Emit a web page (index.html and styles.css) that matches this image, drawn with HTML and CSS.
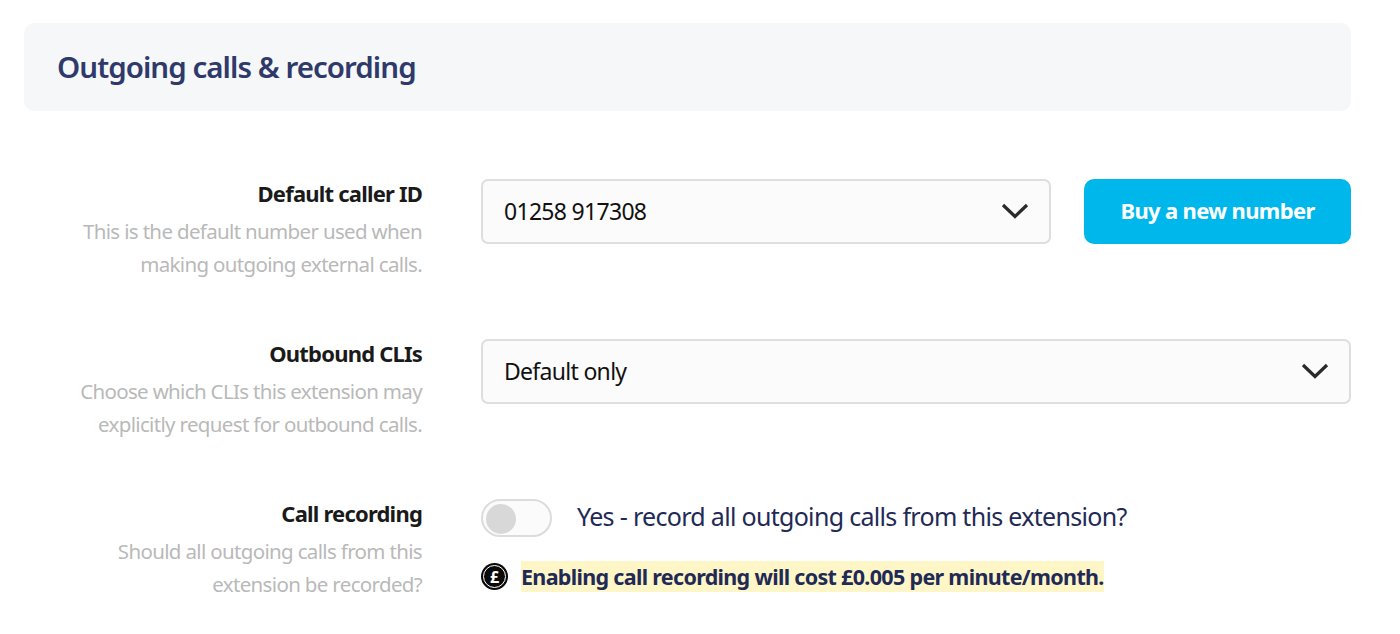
FILE: index.html
```html
<!DOCTYPE html>
<html lang="en">
<head>
  <meta charset="UTF-8" />
  <title>Outgoing calls &amp; recording</title>
  <link rel="stylesheet" href="styles.css">
</head>
<body>
  <div class="panel-header">
    <h2>Outgoing calls &amp; recording</h2>
  </div>

  <div class="row">
    <div class="info">
      <label>Default caller ID</label>
      <p>This is the default number used when<br>making outgoing external calls.</p>
    </div>
    <div class="controls">
      <div class="select">
        <span>01258 917308</span>
        <svg class="chevron" viewBox="0 0 28 18"><path d="M2 3 L14 14.5 L26 3" /></svg>
      </div>
      <button>Buy a new number</button>
    </div>
  </div>

  <div class="row">
    <div class="info">
      <label>Outbound CLIs</label>
      <p>Choose which CLIs this extension may<br>explicitly request for outbound calls.</p>
    </div>
    <div class="controls">
      <div class="select">
        <span>Default only</span>
        <svg class="chevron" viewBox="0 0 28 18"><path d="M2 3 L14 14.5 L26 3" /></svg>
      </div>
    </div>
  </div>

  <div class="row">
    <div class="info">
      <label>Call recording</label>
      <p>Should all outgoing calls from this<br>extension be recorded?</p>
    </div>
    <div>
      <div class="toggle-line">
        <div class="toggle"><div class="knob"></div></div>
        <span class="toggle-text">Yes - record all outgoing calls from this extension?</span>
      </div>
      <div class="notice">
        <span class="pound">£</span>
        <span class="highlight">Enabling call recording will cost £0.005 per minute/month.</span>
      </div>
    </div>
  </div>
</body>
</html>
```

FILE: styles.css
```css
body {
  margin: 0;
  padding: 23px 49px 0 24px;
  font-family: "Noto Sans", sans-serif;
  background: white;
  overflow: hidden;
}
.panel-header {
  height: 88px;
  padding-left: 33px;
  display: flex;
  align-items: center;
  background: #f6f7f9;
  border-radius: 10px;
}
h2 {
  margin: 0 0 1px;
  font-size: 29.5px;
  font-weight: 600;
  letter-spacing: -0.95px;
  color: #2f3a6b;
}
.row {
  display: flex;
  gap: 59px;
  height: 160px;
}
.panel-header + .row {
  margin-top: 68px;
}
.info {
  width: 398px;
  flex-shrink: 0;
  text-align: right;
}
label {
  display: block;
  font-size: 22px;
  line-height: 28px;
  font-weight: 700;
  letter-spacing: -0.8px;
  color: #1a1a1a;
}
.info p {
  margin: 8px 0 0;
  font-size: 20.5px;
  line-height: 32.5px;
  letter-spacing: -0.66px;
  color: #b9b9b9;
}
.controls {
  flex: 1;
  display: flex;
  gap: 33px;
  align-items: flex-start;
}
.select {
  flex: 1;
  height: 65px;
  box-sizing: border-box;
  padding: 0 20px 2px 21px;
  display: flex;
  align-items: center;
  justify-content: space-between;
  background: #fbfbfb;
  border: 2px solid #dedede;
  border-radius: 7px;
  font-size: 23px;
  letter-spacing: -0.7px;
  color: #111;
}
.chevron {
  width: 28px;
  height: 18px;
  margin-top: 1px;
  fill: none;
  stroke: #2a2a2a;
  stroke-width: 3.2;
}
button {
  width: 267px;
  height: 65px;
  padding: 0 0 4px;
  background: #00b7eb;
  color: white;
  border: none;
  border-radius: 10px;
  font-family: inherit;
  font-size: 22px;
  font-weight: 700;
  letter-spacing: -0.65px;
}
.toggle-line {
  display: flex;
  align-items: center;
  gap: 25px;
  font-size: 25px;
  letter-spacing: -0.69px;
  color: #1f2a55;
}
.toggle-text {
  padding-bottom: 4px;
}
.toggle {
  width: 71px;
  height: 38px;
  box-sizing: border-box;
  padding: 3px;
  background: #fbfbfb;
  border: 2px solid #dcdcdc;
  border-radius: 19px;
}
.knob {
  width: 30px;
  height: 30px;
  background: #d8d8d8;
  border-radius: 50%;
}
.notice {
  display: flex;
  align-items: center;
  gap: 13px;
  margin-top: 24px;
}
.pound {
  width: 27px;
  height: 27px;
  display: flex;
  align-items: center;
  justify-content: center;
  background: #0a0a0a;
  color: white;
  outline: 1px solid white;
  outline-offset: -3px;
  border-radius: 50%;
  font-size: 16px;
  font-weight: 700;
}
.highlight {
  background: #fff6c8;
  font-size: 21.5px;
  line-height: 31px;
  font-weight: 700;
  letter-spacing: -0.68px;
  color: #1f2a55;
}
```
